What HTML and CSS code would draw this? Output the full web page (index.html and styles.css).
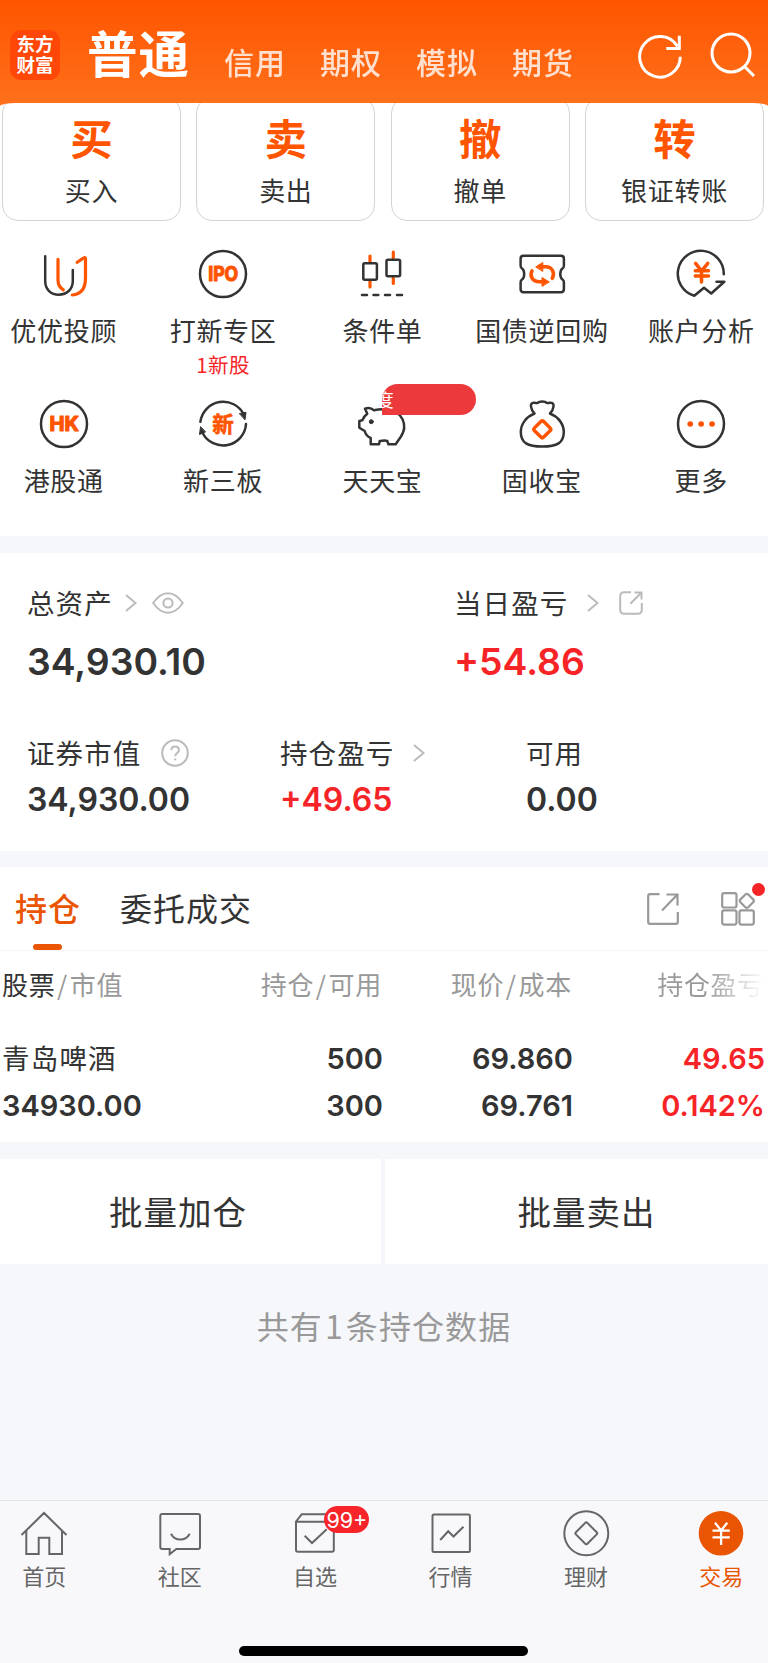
FILE: index.html
```html
<!DOCTYPE html>
<html lang="zh-CN">
<head>
    <meta charset="UTF-8">
    <meta name="viewport" content="width=device-width, initial-scale=1.0">
    <title>交易 - 东方财富</title>
    <link rel="stylesheet" href="styles.css">
</head>
<body>
    <header class="header">
        <div class="logo">东方<br>财富</div>
        <nav class="accounts">
            <a class="current">普通</a>
            <a>信用</a>
            <a>期权</a>
            <a>模拟</a>
            <a>期货</a>
        </nav>
        <svg class="refresh" width="48" height="48" viewBox="0 0 48 48">
            <path d="M44.3 24.7A20.3 20.3 0 1 1 41.5 14.5M43.3 3.7V16.4H30.3"/>
        </svg>
        <svg class="search" width="48" height="48" viewBox="0 0 48 48">
            <circle cx="21" cy="21" r="19"/>
            <path d="M34.5 34.5L44 44"/>
        </svg>
    </header>

    <section class="trade">
        <div class="cards">
            <div class="card"><b>买</b><span>买入</span></div>
            <div class="card"><b>卖</b><span>卖出</span></div>
            <div class="card"><b>撤</b><span>撤单</span></div>
            <div class="card"><b>转</b><span>银证转账</span></div>
        </div>

        <div class="tools">
            <div class="tool">
                <svg class="icon" viewBox="0 0 48 48">
                    <path d="M5.2 6.3V31C5.2 39.5 11 44.7 18.8 44.7S32.8 39.5 32.8 31V20"/>
                    <path class="o" d="M18 9.3V30C18 34.5 19.5 37.5 23.3 39.8M37.2 12.3L43.5 8Q45.5 6.8 45.5 9V28C45.5 38 41.5 44.3 32.2 45"/>
                </svg>
                <span>优优投顾</span>
            </div>
            <div class="tool">
                <svg class="icon" viewBox="0 0 48 48">
                    <circle cx="24" cy="24" r="23"/>
                    <text x="24.2" y="31" font-size="19.5" textLength="30" lengthAdjust="spacingAndGlyphs">IPO</text>
                </svg>
                <span>打新专区</span>
                <small>1新股</small>
            </div>
            <div class="tool">
                <svg class="icon" viewBox="0 0 48 48">
                    <path class="o" d="M12 6V12M12 31V37M35.3 2.2V8M35.3 28V33.5"/>
                    <rect x="5.3" y="13.3" width="13.6" height="16.4" rx="1.5"/>
                    <rect x="28.5" y="9.8" width="13.6" height="16.4" rx="1.5"/>
                    <path d="M4 45H9M15.5 45H20.3M27 45H32M39 45H44"/>
                </svg>
                <span>条件单</span>
            </div>
            <div class="tool">
                <svg class="icon" viewBox="0 0 48 48">
                    <path d="M5.5 5.8H43Q45.9 5.8 45.9 8.7V15.5Q45.9 17.8 44.5 18.5Q42.3 20 42.3 24T44.5 29.5Q45.9 30.3 45.9 32.5V39.3Q45.9 42.2 43 42.2H5.5Q2.6 42.2 2.6 39.3V32.5Q2.6 30.3 4 29.5Q6.2 28 6.2 24T4 18.5Q2.6 17.8 2.6 15.5V8.7Q2.6 5.8 5.5 5.8Z"/>
                    <path class="o thick" d="M23 16.8H28C34 16.8 37.5 23 34.2 28.3M25 31.8H21.5C14.5 31.8 11.3 26 14 20.8"/>
                    <path class="of" d="M18 16.8L24.8 12.5V21ZM31 31.8L24 27.5V36Z"/>
                </svg>
                <span>国债逆回购</span>
            </div>
            <div class="tool">
                <svg class="icon" viewBox="0 0 48 48">
                    <path d="M46.8 24.2A23 23 0 1 0 17.3 45.8L27 37.7L34.2 43.5L47.3 31.7H39.5"/>
                    <path class="o thick" d="M18.6 13.4L24.5 21L30.8 13.4M24.5 21V32M18.3 20.8H31.5M18.3 26H31.5"/>
                </svg>
                <span>账户分析</span>
            </div>
            <div class="tool">
                <svg class="icon" viewBox="0 0 48 48">
                    <circle cx="24" cy="24" r="23"/>
                    <text x="24.2" y="31" font-size="19.5" textLength="29.5" lengthAdjust="spacingAndGlyphs">HK</text>
                </svg>
                <span>港股通</span>
            </div>
            <div class="tool">
                <svg class="icon" viewBox="0 0 48 48">
                    <path d="M1.4 21.8A23 23 0 0 1 44.8 14.5M47 24A23 23 0 0 1 3.6 33"/>
                    <path class="df" d="M40.7 13.5L47 12.3L46 19.5ZM1.5 27L0.5 34.5L6.3 32Z"/>
                    <text class="cjk" x="24" y="31.8" font-size="21.5">新</text>
                </svg>
                <span>新三板</span>
            </div>
            <div class="tool">
                <svg class="icon" viewBox="0 0 48 48">
                    <path d="M7 8.7C10 7.5 13.5 8 16 10.3C24 8.5 37 9 42 15.5C46 20 47.5 27 45 32.5C43.3 37 40.5 40 37.7 44.2H30.3L29.3 41C26.5 40 24 41 21.7 41L21 44.2H12.7V38C9 36.5 7.5 34 6.7 31L1.3 27.7V21L4.3 20.3C5.3 17.5 7 15.5 9.3 13.8Z"/>
                    <circle class="df" cx="13.3" cy="21.7" r="2"/>
                </svg>
                <i class="promo">度</i>
                <span>天天宝</span>
            </div>
            <div class="tool">
                <svg class="icon" viewBox="0 0 48 48">
                    <path d="M16.5 13.5C12.5 9.5 11.5 3 15.5 2.8C17.5 2.3 18.5 3.5 19.5 3C21.5 1 27 1 29 3C30 3.5 31 2.3 33 2.8C37 3 36 9.5 32 13.5C40 16.5 45.8 24 45.8 32C45.8 43 39 46.6 24.3 46.6S2.8 43 2.8 32C2.8 24 8.5 16.5 16.5 13.5"/>
                    <rect class="o thick" x="17.8" y="22.8" width="13" height="13" rx="2" transform="rotate(45 24.3 29.3)"/>
                </svg>
                <span>固收宝</span>
            </div>
            <div class="tool">
                <svg class="icon" viewBox="0 0 48 48">
                    <circle cx="24" cy="24" r="23"/>
                    <path class="o dots" d="M13.2 24H13.3M24.1 24H24.2M35 24H35.1"/>
                </svg>
                <span>更多</span>
            </div>
        </div>
    </section>

    <section class="assets">
        <div class="asset-row total">
            <div class="asset">
                <div class="label"><span>总资产</span>
                    <svg class="arrow" width="12" height="18" viewBox="0 0 12 18"><path d="M1 1L10.5 9L1 17"/></svg>
                    <svg class="eye" width="32" height="22" viewBox="0 0 32 22"><path d="M1.2 11Q8 1.2 16 1.2T30.8 11Q24 20.8 16 20.8T1.2 11Z"/><circle cx="16" cy="11" r="4.6"/></svg>
                </div>
                <div class="value">34,930.10</div>
            </div>
            <div class="asset">
                <div class="label"><span>当日盈亏</span>
                    <svg class="arrow wide" width="12" height="18" viewBox="0 0 12 18"><path d="M1 1L10.5 9L1 17"/></svg>
                    <svg class="share" width="24" height="24" viewBox="0 0 24 24"><path d="M12 1.2H5.2Q1.2 1.2 1.2 5.2V18.8Q1.2 22.8 5.2 22.8H18.8Q22.8 22.8 22.8 18.8V12M15.5 1.5H22.5V8.5M22 2L11.3 12.8"/></svg>
                </div>
                <div class="value red">+54.86</div>
            </div>
        </div>
        <div class="asset-row">
            <div class="asset">
                <div class="label"><span>证券市值</span>
                    <svg class="help" width="28" height="28" viewBox="0 0 28 28"><circle cx="14" cy="14" r="12.8"/><path d="M10.3 11.3C10.3 6.3 18 6.3 18 11C18 14 14.2 14 14.2 17.3M14.2 19.5V21.3"/></svg>
                </div>
                <div class="value">34,930.00</div>
            </div>
            <div class="asset">
                <div class="label"><span>持仓盈亏</span>
                    <svg class="arrow wide" width="12" height="18" viewBox="0 0 12 18"><path d="M1 1L10.5 9L1 17"/></svg>
                </div>
                <div class="value red">+49.65</div>
            </div>
            <div class="asset">
                <div class="label"><span>可用</span></div>
                <div class="value">0.00</div>
            </div>
        </div>
    </section>

    <section class="positions">
        <div class="tabs">
            <a class="tab active">持仓</a>
            <a class="tab">委托成交</a>
            <svg class="export" width="32" height="32" viewBox="0 0 32 32"><path d="M12.5 1.2H3Q1.2 1.2 1.2 3V29Q1.2 30.8 3 30.8H29Q30.8 30.8 30.8 29V19M19.5 1.5H30.5V12.5M30 2L15 17.5"/></svg>
            <div class="layout">
                <svg width="34" height="34" viewBox="0 0 34 34">
                    <rect x="1.2" y="1.2" width="14.3" height="14.3" rx="2"/>
                    <rect x="1.2" y="18.3" width="14.3" height="14.3" rx="2"/>
                    <rect x="18.5" y="18.3" width="14.3" height="14.3" rx="2"/>
                    <rect x="20.3" y="3.3" width="11" height="11" rx="2" transform="rotate(45 25.8 8.8)"/>
                </svg>
                <i class="dot"></i>
            </div>
        </div>
        <div class="row thead">
            <div><em>股票</em><s>/</s>市值</div>
            <div>持仓<s>/</s>可用</div>
            <div>现价<s>/</s>成本</div>
            <div class="fade">持仓盈亏</div>
        </div>
        <div class="row stock">
            <div><span class="name">青岛啤酒</span><span>34930.00</span></div>
            <div><span>500</span><span>300</span></div>
            <div><span>69.860</span><span>69.761</span></div>
            <div class="red"><span>49.65</span><span>0.142%</span></div>
        </div>
    </section>

    <div class="batch">
        <a>批量加仓</a>
        <a>批量卖出</a>
    </div>
    <p class="count">共有<s>1</s>条持仓数据</p>

    <footer class="tabbar">
        <nav class="menu">
            <a>
                <svg class="nav-icon" viewBox="0 0 48 48"><path d="M1.5 26L24 4L46.5 26M6.3 22V45H18.7V28.7H29.3V45H42V22"/></svg>
                <span>首页</span>
            </a>
            <a>
                <svg class="nav-icon" viewBox="0 0 48 48"><path d="M6.3 5H42Q44 5 44 7V38Q44 40 42 40H20.3L13.7 45.2V40H6.3Q4.3 40 4.3 38V7Q4.3 5 6.3 5ZM15 24.7Q18 30.6 24.3 30.6T33.7 24.7"/></svg>
                <span>社区</span>
            </a>
            <a>
                <svg class="nav-icon" viewBox="0 0 48 48"><path d="M5 12.5L10.7 5.3H37L42.8 12.5V41Q42.8 42.8 41 42.8H6.8Q5 42.8 5 41ZM5 12.8H42.8M13.7 26.7L21 34L35.7 20.3"/></svg>
                <i class="badge">99+</i>
                <span>自选</span>
            </a>
            <a>
                <svg class="nav-icon" viewBox="0 0 48 48"><rect x="5.5" y="5.5" width="37.4" height="37.4" rx="1.5"/><path d="M13.2 31L21.2 22.3L26.5 27.5L36.5 17.7"/></svg>
                <span>行情</span>
            </a>
            <a>
                <svg class="nav-icon" viewBox="0 0 48 48"><circle cx="24.3" cy="24.3" r="22"/><rect x="16.2" y="16.2" width="16.2" height="16.2" rx="1.5" transform="rotate(45 24.3 24.3)"/></svg>
                <span>理财</span>
            </a>
            <a class="active">
                <svg class="nav-icon" viewBox="0 0 48 48"><circle cx="24" cy="24.3" r="22.3"/><path d="M18 13.7L24.1 21.5L30.3 13.7M24.1 21.5V36M15.5 21.7H32.8M15.5 28.3H32.8"/></svg>
                <span>交易</span>
            </a>
        </nav>
        <div class="home-bar"></div>
    </footer>
</body>
</html>
```
FILE: styles.css
```css
* { box-sizing: border-box; }
body { margin: 0; width: 768px; height: 1663px; display: flex; flex-direction: column; overflow: hidden; background: #f6f7fa; color: #333; font-family: "Noto Sans CJK SC", sans-serif; }
svg { display: block; flex: none; fill: none; }
i, em { font-style: normal; }
s { text-decoration: none; }
.red { color: #f72427; }

/* top bar */
.header { flex: none; height: 108px; padding: 30px 0 0 10px; display: flex; align-items: flex-start; background: linear-gradient(#ff5500, #ff711c); color: #fff; }
.header svg { stroke: #fff; stroke-width: 3; }
.logo { width: 50px; height: 50px; padding-top: 3px; border-radius: 11px; background: #ff4708; text-align: center; font-size: 18.5px; font-weight: 700; line-height: 21px; }
.accounts { display: flex; gap: 34px; margin: -12px 0 0 27px; }
.accounts a { width: 62px; margin-top: 21px; font-size: 30px; line-height: 44px; letter-spacing: 1px; font-weight: 500; opacity: .8; }
.accounts a.current { width: 103px; margin: 1px 0 0; font-size: 50.5px; line-height: 65px; font-weight: 700; opacity: 1; }
.refresh { margin: 2px 0 0 62px; }
.search { margin: 2px 0 0 26px; }

/* trade entries */
.trade { flex: none; height: 433px; margin-top: -5px; border-radius: 16px 16px 0 0 / 3px 3px 0 0; background: #fff; overflow: hidden; }
.cards { display: flex; justify-content: space-between; margin-top: -6px; padding: 0 4px 0 2px; }
.card { width: 179px; height: 124px; padding-top: 8px; border: 1px solid #d4d4d4; border-radius: 16px; display: flex; flex-direction: column; align-items: center; }
.card b { font-size: 42.5px; font-weight: 700; line-height: 62px; color: #ff5500; }
.card span { margin-top: 2px; font-size: 26px; line-height: 40px; letter-spacing: .7px; }
.tools { width: 797px; margin: 29px 0 0 -16px; display: grid; grid-template-columns: repeat(5, 1fr); grid-auto-rows: 150.4px; }
.tool { position: relative; display: flex; flex-direction: column; align-items: center; }
.tool span { margin-top: 12px; font-size: 26px; line-height: 40px; letter-spacing: .7px; }
.tool small { margin-top: -1px; font-size: 20.5px; line-height: 30px; letter-spacing: .5px; color: #f72427; }
.promo { position: absolute; top: -16px; left: 79px; width: 94px; height: 31px; border-radius: 16px 16px 16px 0; background: #ec3a3c; color: #fff; font-size: 18px; line-height: 30px; text-indent: -6px; overflow: hidden; }
.icon { width: 48px; height: 48px; overflow: visible; stroke: #333; stroke-width: 2.5; stroke-linecap: round; stroke-linejoin: round; }
.icon .o { stroke: #ff5500; stroke-width: 3.2; }
.icon .thick { stroke-width: 3.5; }
.icon .dots { stroke-width: 5.6; }
.icon .of { fill: #ff5500; stroke: #ff5500; stroke-width: 1; }
.icon .df { fill: #333; stroke-width: 1; }
.icon text { fill: #ff5500; stroke: #ff5500; stroke-width: 1.2; font-family: Inter, sans-serif; font-weight: 700; text-anchor: middle; }
.icon text.cjk { stroke-width: .6; font-family: "Noto Sans CJK SC", sans-serif; }

/* assets */
.assets { flex: none; height: 298px; margin-top: 17px; padding: 29px 0 0 27px; background: #fff; }
.asset-row { display: grid; grid-template-columns: 253px 246px 1fr; height: 150px; }
.asset-row.total { grid-template-columns: 427px 1fr; }
.label { display: flex; align-items: center; height: 42px; font-size: 27.5px; line-height: 40px; letter-spacing: 1.1px; }
.label span { margin-bottom: 3px; }
.label svg { stroke: #bbb; stroke-width: 2; }
.arrow { margin-left: 12px; }
.arrow.wide { margin-left: 19px; }
.eye { margin-left: 15px; }
.share { margin-left: 20px; }
.help { margin-left: 20px; }
.value { font-family: Inter, sans-serif; font-size: 32px; font-weight: 600; line-height: 52px; }
.total .value { margin-top: 12px; font-size: 37.3px; line-height: 51px; }

/* positions */
.positions { flex: none; height: 275px; margin-top: 16px; background: #fff; }
.tabs { display: flex; align-items: center; height: 84px; padding: 0 13px 0 15px; border-bottom: 1px solid #f3f4f6; }
.tab { position: relative; height: 83px; margin-right: 39px; font-size: 32px; line-height: 81px; letter-spacing: 1px; }
.tab.active { color: #ea5504; font-weight: 500; }
.tab.active::after { content: ""; position: absolute; left: 18px; bottom: 0; width: 29px; height: 6px; border-radius: 3px; background: #ea5504; }
.tabs svg { stroke: #999; stroke-width: 2.2; }
.export { margin-left: auto; }
.layout { position: relative; margin-left: 42px; }
.dot { position: absolute; top: -9px; right: -10px; width: 13px; height: 13px; border-radius: 50%; background: #f72427; }
.row { display: grid; grid-template-columns: 192px 190px 190px 192px; padding-right: 4px; text-align: right; }
.row > :first-child { padding-left: 2px; text-align: left; }
.thead { height: 68px; font-size: 26px; line-height: 65px; letter-spacing: .7px; color: #999; }
.thead em { color: #333; }
.thead s { margin: 0 2px 0 1.5px; }
.thead .fade { color: transparent; background: linear-gradient(90deg, #999 70%, #fff 100%); background-clip: text; -webkit-background-clip: text; }
.stock { padding: 17px 3px 0 0; grid-template-columns: 193px 190px 190px 192px; font-family: Inter, sans-serif; font-size: 29px; font-weight: 600; }
.stock span { display: block; height: 46.5px; line-height: 46.5px; }
.stock .name { font-family: "Noto Sans CJK SC", sans-serif; font-size: 27.5px; font-weight: 400; line-height: 43px; letter-spacing: 1.2px; }

.batch { flex: none; display: grid; grid-template-columns: 381px 1fr; gap: 4px; margin-top: 17px; height: 105px; text-align: center; font-size: 33.5px; line-height: 103px; letter-spacing: 1px; }
.batch a { background: #fff; }
.batch a:first-child { padding-right: 25px; }
.batch a:last-child { padding-left: 20px; }
.count { margin: 38px 0 0; text-align: center; font-size: 32px; line-height: 46px; letter-spacing: 1.1px; color: #999; }
.count s { margin: 0 2px; }

/* bottom bar */
.tabbar { height: 163px; margin-top: auto; border-top: 1px solid #e3e5e8; background: #f8f8fb; }
.menu { width: 812.4px; margin-left: -23.4px; padding-top: 8px; display: grid; grid-template-columns: repeat(6, 1fr); height: 145px; }
.menu a { position: relative; display: flex; flex-direction: column; align-items: center; font-size: 22px; line-height: 32px; color: #666; }
.nav-icon { width: 48px; height: 48px; margin-bottom: 2px; stroke: #666; stroke-width: 2; }
.menu .active { color: #ea5504; }
.active circle { fill: #ea5504; stroke: none; }
.active path { stroke: #fff; stroke-width: 2.3; }
.badge { position: absolute; top: -3px; left: 77px; width: 45px; height: 27px; border-radius: 14px; background: #f7242a; color: #fff; font: 21.5px/28px Inter, sans-serif; text-align: center; }
.home-bar { width: 289px; height: 10px; margin-left: 239px; border-radius: 5px; background: #000; }
```
